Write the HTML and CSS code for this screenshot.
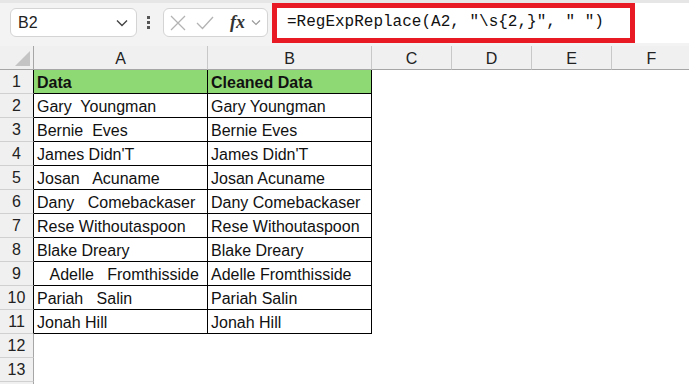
FILE: index.html
```html
<!DOCTYPE html>
<html lang="en">
<head>
    <meta charset="UTF-8">
    <title>RegExpReplace</title>
    <link rel="stylesheet" href="styles.css">
</head>
<body>
    <div class="toolbar">
        <div class="name-box">
            <span>B2</span>
            <svg width="12" height="8" viewBox="0 0 12 8"><path d="M1 1.5 L6 6.5 L11 1.5" fill="none" stroke="#444" stroke-width="1.4"/></svg>
        </div>
        <div class="dots"><i></i><i></i><i></i></div>
        <div class="fx-box">
            <svg width="16" height="16" viewBox="0 0 16 16"><path d="M1 1 L15 15 M15 1 L1 15" stroke="#b3b3b3" stroke-width="1.3"/></svg>
            <svg width="18" height="14" viewBox="0 0 18 14"><path d="M1 7 L6.5 12.5 L17 1" fill="none" stroke="#b3b3b3" stroke-width="1.3"/></svg>
            <span class="fx">fx</span>
            <svg width="10" height="7" viewBox="0 0 10 7"><path d="M1 1.5 L5 5.5 L9 1.5" fill="none" stroke="#999" stroke-width="1.2"/></svg>
        </div>
        <div class="formula-bar">
            <div class="formula">=RegExpReplace(A2, "\s{2,}", " ")</div>
        </div>
    </div>

    <div class="sheet">
        <div class="corner"><span class="tri"></span></div>
        <div class="col-head">A</div>
        <div class="col-head">B</div>
        <div class="col-head">C</div>
        <div class="col-head">D</div>
        <div class="col-head">E</div>
        <div class="col-head">F</div>
    </div>
    <div class="sheet" id="rows"></div>

    <script>
        const data = [
            ['Data', 'Cleaned Data'],
            ['Gary  Youngman', 'Gary Youngman'],
            ['Bernie  Eves', 'Bernie Eves'],
            ['James Didn\'T', 'James Didn\'T'],
            ['Josan   Acuname', 'Josan Acuname'],
            ['Dany   Comebackaser', 'Dany Comebackaser'],
            ['Rese Withoutaspoon', 'Rese Withoutaspoon'],
            ['Blake Dreary', 'Blake Dreary'],
            ['   Adelle   Fromthisside', 'Adelle Fromthisside'],
            ['Pariah   Salin', 'Pariah Salin'],
            ['Jonah Hill', 'Jonah Hill']
        ];

        const rows = document.getElementById('rows');
        let html = '';
        for (let r = 1; r <= 14; r++) {
            const item = data[r - 1];
            // row 14 only peeks in at the bottom edge, so no number
            const label = r < 14 ? r : '';
            if (item) {
                const cls = r === 1 ? 'cell head' : 'cell';
                html += `<div class="row-head in-table">${label}</div>`;
                html += `<div class="${cls}">${item[0]}</div>`;
                html += `<div class="${cls}">${item[1]}</div>`;
                html += '<div class="empty"></div><div class="empty"></div><div class="empty"></div><div class="empty"></div>';
            } else {
                html += `<div class="row-head">${label}</div>`;
                html += '<div class="empty"></div><div class="empty"></div><div class="empty"></div><div class="empty"></div><div class="empty"></div><div class="empty"></div>';
            }
        }
        rows.innerHTML = html;
    </script>
</body>
</html>
```

FILE: styles.css
```css
* {
    margin: 0;
    padding: 0;
    box-sizing: border-box;
}

body {
    width: 689px;
    height: 384px;
    overflow: hidden;
    background: #fff;
    font-family: "Liberation Sans", Arial, sans-serif;
    color: #111;
}

.toolbar {
    height: 46px;
    background: #f3f3f3;
    border-top: 3px solid #e6e6e6;
    display: flex;
    align-items: flex-start;
}

.name-box {
    margin: 5px 0 0 10px;
    width: 127px;
    height: 29px;
    background: #fff;
    border: 1px solid #d4d4d4;
    border-radius: 6px;
    display: flex;
    align-items: center;
    justify-content: space-between;
    padding: 0 8px 0 7px;
    font-size: 16px;
    color: #222;
}

.dots {
    margin: 13px 0 0 10px;
    width: 4px;
    display: flex;
    flex-direction: column;
    gap: 2px;
}

.dots i {
    display: block;
    width: 3px;
    height: 3px;
    background: #555;
}

.fx-box {
    margin: 5px 0 0 12px;
    width: 105px;
    height: 29px;
    background: #fff;
    border: 1px solid #d4d4d4;
    border-radius: 6px;
    display: flex;
    align-items: center;
    padding: 0 6px;
    gap: 10px;
}

.fx {
    font-family: "Liberation Serif", "DejaVu Serif", serif;
    font-style: italic;
    font-weight: bold;
    font-size: 18px;
    color: #333;
    margin-left: 6px;
    margin-right: -4px;
}

.formula-bar {
    margin: 0 0 0 4px;
    flex: 1;
    height: 40px;
    background: #fff;
}

.formula {
    width: 363px;
    height: 40px;
    border: 5px solid #e81b24;
    font-family: "Liberation Mono", "DejaVu Sans Mono", monospace;
    font-size: 16px;
    line-height: 28px;
    padding-left: 10px;
    white-space: pre;
    color: #111;
}

.sheet {
    display: grid;
    grid-template-columns: 34px 174px 164px 80px 80px 80px 80px;
    white-space: pre;
}

.corner,
.col-head {
    height: 24px;
    background: #f0f0f0;
    border-bottom: 1px solid #a6a6a6;
    border-right: 1px solid #c8c8c8;
}

.corner {
    border-right-color: #a6a6a6;
    position: relative;
}

.tri {
    position: absolute;
    right: 3px;
    bottom: 3px;
    width: 0;
    height: 0;
    border-left: 15px solid transparent;
    border-bottom: 15px solid #c4c4c4;
}

.col-head {
    text-align: center;
    font-size: 16px;
    line-height: 23px;
    padding-top: 1px;
    color: #222;
}

.row-head {
    height: 24px;
    background: #f0f0f0;
    border-bottom: 1px solid #d0d0d0;
    border-right: 1px solid #a6a6a6;
    text-align: center;
    font-size: 16px;
    line-height: 22px;
    padding-top: 1px;
    color: #222;
}

.row-head.in-table {
    border-right-color: #000;
}

.cell {
    height: 24px;
    border-right: 1px solid #000;
    border-bottom: 1px solid #000;
    padding: 2px 0 0 3px;
    font-size: 16px;
    line-height: 21px;
    overflow: hidden;
}

.cell.head {
    background: #8fd974;
    font-weight: bold;
}

.empty {
    height: 24px;
}
```
